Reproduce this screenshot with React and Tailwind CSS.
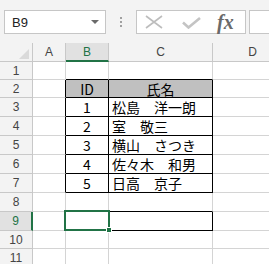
import React from "react";

const rowHeights = [18, 18, 19, 19, 19, 19, 19, 19, 19, 18, 18];
const colW = ["w-[33px]", "w-[43px]", "w-[104px]", "w-[80px]"];
const letters = ["A", "B", "C", "D"];

const cellData = {
  "2-1": "ID",
  "2-2": "氏名",
  "3-1": "1",
  "3-2": "松島　洋一朗",
  "4-1": "2",
  "4-2": "室　敬三",
  "5-1": "3",
  "5-2": "横山　さつき",
  "6-1": "4",
  "6-2": "佐々木　和男",
  "7-1": "5",
  "7-2": "日高　京子",
};

function inRegion(r, c) {
  return ((r >= 2 && r <= 7) || r === 9) && (c === 1 || c === 2);
}

const hFont = { fontFamily: '"Liberation Sans", "Noto Sans", sans-serif' };
const jFont = { fontFamily: '"Noto Sans CJK JP", "Noto Sans", sans-serif' };

function FormulaBar() {
  return (
    <div className="h-[43px] bg-[#f3f3f3] flex items-start pt-[10px] overflow-hidden">
      <div className="shrink-0 ml-[4px] w-[102px] h-[24px] bg-white border border-[#c6c6c6] flex items-center justify-between pl-[7px] pr-[6px]">
        <span className="text-[13px] text-[#222] leading-none" style={hFont}>B9</span>
        <svg width="8" height="5" viewBox="0 0 8 5">
          <path d="M0 0 L8 0 L4 4 Z" fill="#6a6a6a" />
        </svg>
      </div>
      <div className="shrink-0 w-[30px] h-[24px] flex flex-col items-center justify-center gap-[2px]">
        <div className="w-[2px] h-[2px] bg-[#a0a0a0]" />
        <div className="w-[2px] h-[2px] bg-[#a0a0a0]" />
        <div className="w-[2px] h-[2px] bg-[#a0a0a0]" />
      </div>
      <div className="shrink-0 w-[110px] h-[24px] bg-white border border-[#c6c6c6] flex items-center">
        <svg className="shrink-0 ml-[8px]" width="18" height="14" viewBox="0 0 18 14">
          <path d="M1 1 L17 13 M17 1 L1 13" stroke="#bdbdbd" strokeWidth="1.6" fill="none" />
        </svg>
        <svg className="shrink-0 ml-[19px] mt-[2px]" width="19" height="12" viewBox="0 0 19 12">
          <path d="M1 5.5 L6.5 10.5 L18 1" stroke="#c4c4c4" strokeWidth="2.6" fill="none" />
        </svg>
        <span
          className="ml-[16px] text-[20px] italic font-semibold text-[#6a6a6a] leading-none"
          style={{ fontFamily: '"Liberation Serif", "DejaVu Serif", serif' }}
        >
          fx
        </span>
      </div>
      <div className="shrink-0 ml-[3px] w-[60px] h-[24px] bg-white border border-[#c6c6c6]" />
    </div>
  );
}

function HeaderRow() {
  return (
    <div className="flex h-[19px]">
      <div className="w-[33px] shrink-0 h-full bg-[#f3f3f3] border-r border-b border-[#c8c8c8] relative">
        <svg className="absolute left-[19px] top-[6px]" width="10" height="10" viewBox="0 0 10 10">
          <path d="M10 0 L10 10 L0 10 Z" fill="#dadada" />
        </svg>
      </div>
      {letters.map((l, i) => (
        <div
          key={l}
          className={
            i === 1
              ? "w-[43px] shrink-0 h-full bg-[#e1e1e1] border-r border-[#c8c8c8] border-b-2 border-b-[#217346] flex items-center justify-center text-[12px] text-[#217346]"
              : colW[i] +
                " shrink-0 h-full bg-[#f3f3f3] border-r border-b border-[#c8c8c8] flex items-center justify-center text-[12px] text-[#444]"
          }
          style={hFont}
        >
          {l}
        </div>
      ))}
    </div>
  );
}

function Row({ r, h }) {
  const sel = r === 9;
  return (
    <div className="flex shrink-0" style={{ height: h }}>
      <div
        className={
          sel
            ? "w-[33px] shrink-0 h-full bg-[#e1e1e1] border-b border-b-[#c8c8c8] border-r-2 border-r-[#217346] flex items-center justify-center text-[12px] text-[#217346]"
            : "w-[33px] shrink-0 h-full bg-[#f3f3f3] border-r border-b border-[#c8c8c8] flex items-center justify-center text-[12px] text-[#444]"
        }
        style={hFont}
      >
        {r}
      </div>
      {letters.map((l, c) => {
        const rightBlack = inRegion(r, c) || inRegion(r, c + 1);
        const bottomBlack = inRegion(r, c) || inRegion(r + 1, c);
        const isHead = r === 2 && (c === 1 || c === 2);
        const text = cellData[`${r}-${c}`];
        const justify = c === 2 && r !== 2 ? "justify-start pl-[3px]" : "justify-center";
        return (
          <div
            key={l}
            className={[
              colW[c],
              "shrink-0 h-full border-r border-b flex items-center text-[14px] text-black leading-none",
              justify,
              rightBlack ? "border-r-black" : "border-r-[#d4d4d4]",
              bottomBlack ? "border-b-black" : "border-b-[#d4d4d4]",
              isHead ? "bg-[#c0c0c0]" : "bg-white",
            ].join(" ")}
            style={jFont}
          >
            {text}
          </div>
        );
      })}
    </div>
  );
}

export default function App() {
  return (
    <div className="w-[269px] h-[264px] overflow-hidden bg-white">
      <FormulaBar />
      <div className="relative">
        <HeaderRow />
        {rowHeights.map((h, i) => (
          <Row key={i} r={i + 1} h={h} />
        ))}
        <div className="absolute left-[64px] top-[167px] w-[46px] h-[21px] border-2 border-[#217346]" />
        <div className="absolute left-[106px] top-[184px] w-[6px] h-[6px] bg-[#217346] border border-white" />
      </div>
    </div>
  );
}
